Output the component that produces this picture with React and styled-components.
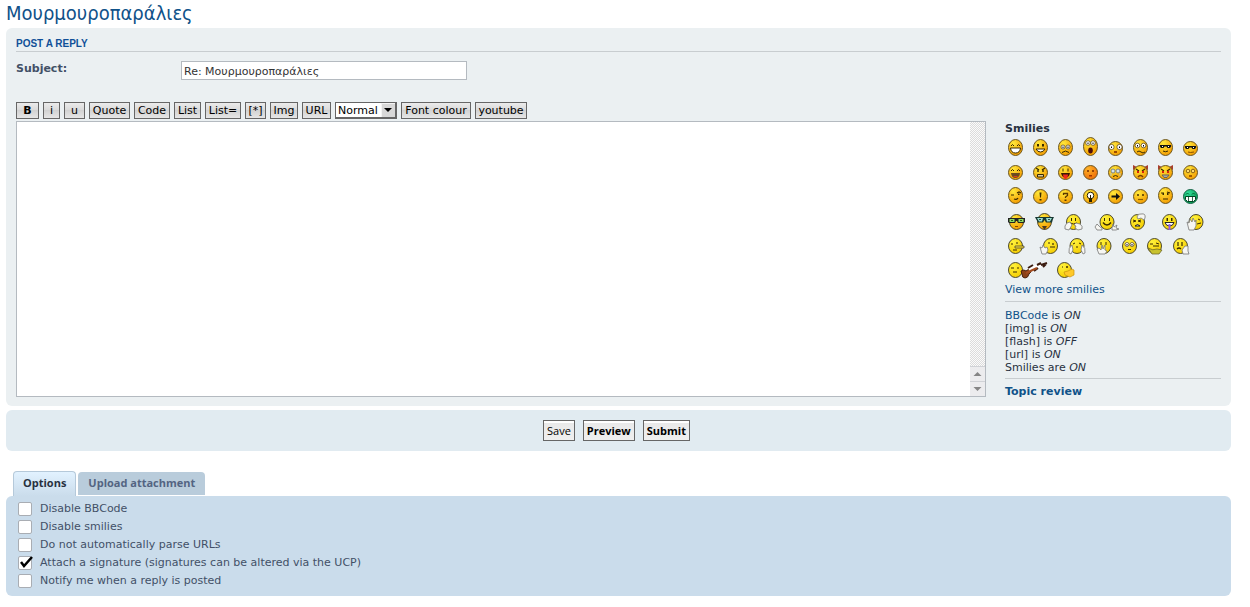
import React from "react";
import styled, { createGlobalStyle } from "styled-components";

const Global = createGlobalStyle`
  * { box-sizing: border-box; }
  body {
    margin: 0;
    background: #fff;
    color: #333a4a;
    font: 11px/13px "DejaVu Sans", Verdana, sans-serif;
  }
  a { color: #105289; text-decoration: none; }
`;

const Page = styled.main`
  padding: 0 19px 11px 6px;
`;
const Title = styled.h1`
  margin: 0;
  height: 28px;
  font: 400 20px/27px "DejaVu Sans Condensed", "Trebuchet MS", sans-serif;
  color: #105289;
`;
const Panel = styled.section`
  border-radius: 6px;
  background: ${(p) => p.$bg};
  padding: ${(p) => p.$pad};
  margin-bottom: ${(p) => p.$after || 0}px;
`;
const PanelTitle = styled.h2`
  margin: 0 0 9px;
  border-bottom: 1px solid #c8cdd0;
  font: bold 10px/15px "Liberation Sans", Arial, sans-serif;
  text-transform: uppercase;
  color: #115098;
`;
const SubjectRow = styled.div`
  display: flex;
  align-items: flex-start;
  margin-bottom: 22px;
`;
const SubjectLabel = styled.label`
  width: 165px;
  line-height: 15px;
  font-weight: bold;
  color: #425067;
`;
const SubjectInput = styled.input`
  width: 286px;
  height: 19px;
  padding: 1px 2px 0;
  border: 1px solid #b4bac0;
  background: #fff;
  color: #333;
  font: 11px "DejaVu Sans", Verdana, sans-serif;
`;
const Toolbar = styled.div`
  display: flex;
  gap: 4px;
  margin-bottom: 2px;
`;
const Button = styled.button`
  height: 17px;
  min-width: ${(p) => p.$w || 0}px;
  padding: 1px 2px 0;
  border: 1px solid #666;
  background: linear-gradient(#ebebeb 0, #d9d9d9 50%, #d2d2d2 50%, #e6e6e6 100%);
  color: #000;
  font: ${(p) => (p.$bold ? "bold" : "normal")} 11px/14px "DejaVu Sans", "Lucida Grande", sans-serif;
  white-space: nowrap;
`;
const ActionButton = styled(Button)`
  height: 21px;
  padding: 0 3px;
  background: linear-gradient(#fff 0, #fff 2px, #e9e9e9 2px, #efefef 100%);
  font-family: "Open Sans", "Lucida Grande", sans-serif;
`;
const SelectBox = styled.span`
  position: relative;
  display: flex;
  width: 62px;
  height: 17px;
`;
const SizeSelect = styled.select`
  appearance: none;
  width: 100%;
  padding: 1px 2px 0;
  border: 1px solid #666;
  border-radius: 0;
  border-right-width: 2px;
  border-bottom-width: 2px;
  background: #fff;
  color: #000;
  font: 11px/13px "DejaVu Sans", "Lucida Grande", sans-serif;
`;
const SelectArrow = styled.svg`
  position: absolute;
  right: 2px;
  top: 1px;
  pointer-events: none;
`;
const Editor = styled.div`
  display: flex;
  gap: 19px;
`;
const MessageBox = styled.div`
  flex: 1;
  display: flex;
  height: 276px;
  border: 1px solid #b4bac0;
  background: #fff;
`;
const Message = styled.textarea`
  flex: 1;
  border: 0;
  padding: 3px;
  resize: none;
  outline: 0;
  background: transparent;
  font: 11px/15px "DejaVu Sans", Verdana, sans-serif;
`;
const Rail = styled.div`
  width: 15px;
  display: flex;
  flex-direction: column;
  justify-content: flex-end;
  background: repeating-conic-gradient(#dcdcdc 0 25%, #fbfbfb 0 50%) 0 0 / 2px 2px;
`;
const RailButton = styled.svg`
  display: block;
  background: #ececee;
  border-top: 1px solid #d0d2d6;
`;
const Sidebar = styled.aside`
  width: 216px;
  color: #28313f;
`;
const SideTitle = styled.h3`
  margin: 0;
  font-size: 11px;
  line-height: 16px;
`;
const SmileyList = styled.div`
  padding-left: 3px;
  margin-bottom: 5px;
`;
const SmileyRow = styled.div`
  display: flex;
  align-items: flex-end;
  gap: 10px;
  height: 24px;
  margin-top: ${(p) => (p.$gap ? 2 : 0)}px;
  &:first-child { height: 19px; }
`;
const Smiley = styled.a`
  display: block;
  svg { display: block; }
`;
const Status = styled.div`
  margin: 5px 0;
  padding: 7px 0 4px;
  border: solid #c8cdd0;
  border-width: 1px 0;
`;
const Actions = styled.div`
  display: flex;
  justify-content: center;
  gap: 8px;
`;
const Tabs = styled.nav`
  display: flex;
  align-items: flex-end;
  gap: 2px;
  padding-left: 7px;
`;
const Tab = styled.a`
  padding: 0 10px;
  border-radius: 4px 4px 0 0;
  font-family: "Open Sans", "Lucida Grande", sans-serif;
  font-weight: bold;
  ${(p) =>
    p.$active
      ? "height: 25px; line-height: 22px; color: #28313f; background: linear-gradient(#e2f2ff, #cadceb); border: 1px solid #b5c9da; border-bottom: 0; padding: 0 9px;"
      : "height: 23px; margin-bottom: 1px; line-height: 22px; color: #536482; background: #b9ccdb;"}
`;
const Option = styled.label`
  position: relative;
  display: flex;
  align-items: flex-start;
  gap: 8px;
  height: 18px;
  line-height: 20px;
  color: #425067;
`;
const Check = styled.input`
  appearance: none;
  width: 14px;
  height: 14px;
  margin: 3px 0 0;
  border: 1px solid #a9adb3;
  border-radius: 2px;
  background: #fff;
`;
const Tick = styled.svg`
  position: absolute;
  left: 1px;
  top: 1px;
  pointer-events: none;
`;

const K = ({ d, c = "#3a2a00", w = 1 }) => <path d={d} fill="none" stroke={c} strokeWidth={w} />;
const F = ({ d, c = "#3a2a00" }) => <path d={d} fill={c} />;
const Shades = ({ y = 0 }) => (
  <g transform={`translate(0 ${y})`}>
    <F d="M2 6h11v1.500L12 9H9.500L8.500 7.500h-2L5.500 9H3L2 7.500z" c="#111" />
    <path d="M4 7.500h1M10 7.500h1" stroke="#fff" />
  </g>
);
const Eyes = ({ y = 5, r = 2.4, a = 4.5, b = 10.5 }) => (
  <g fill="#fff" stroke="#4a3a20" strokeWidth=".7">
    <circle cx={a} cy={y} r={r} />
    <circle cx={b} cy={y} r={r} />
    <path d={`M${a} ${y - 0.5}v1.500M${b} ${y - 0.5}v1.500`} stroke="#000" strokeWidth="1" />
  </g>
);
const Horns = () => <F d="M0 5V0l5 2.500zM15 5V0l-5 2.500z" c="#a8402c" />;

/* Forum faces: h is the height, tone the palette, art the features drawn on the head. */
const classic = [
  [
    { n: "Very Happy", h: 17, art: <><K d="M3 7l1.500-1.500L6 7M9 7l1.500-1.500L12 7" /><path d="M2.500 9h10q-.5 5-5 5t-5-5z" fill="#fff" stroke="#3a2a00" /></> },
    { n: "Smile", h: 17, art: <><F d="M4 5h2v2.500H4zM9 5h2v2.500H9z" /><path d="M3 10h9q-1.500 3-4.500 3T3 10z" fill="#fff" stroke="#3a2a00" /></> },
    { n: "Sad", h: 17, art: <><Eyes y={8} r={2} a={5} b={10} /><K d="M4 13.500q3.500-3 7 0" /></> },
    { n: "Surprised", h: 19, art: <><Eyes y={6} r={2.3} a={5} b={10} /><ellipse cx="7.500" cy="13.500" rx="2.300" ry="3" fill="#4a0d0d" /></> },
    { n: "Shocked", h: 15, art: <><Eyes y={6} r={2.6} a={3.5} b={11.5} /><F d="M6 10h3v2H6z" c="#9c4a00" /></> },
    { n: "Confused", h: 17, art: <><Eyes y={6.5} r={2.3} /><K d="M4 13l2-1 2 1 2 1 2-1" /></> },
    { n: "Cool", h: 17, art: <><Shades y={0} /><K d="M5 12q2.500 1.500 5 0" /></> },
    { n: "Laid back", h: 15, art: <><Shades y={-1} /><K d="M5 11q2 1 6 0" c="#8a5200" /></> },
  ],
  [
    { n: "Laughing", h: 15, art: <><K d="M3 6l1.500-1.500L6 6M9 6l1.500-1.500L12 6" /><F d="M3 8h9q-.5 5-4.500 5T3 8z" c="#6b4a20" /><F d="M5 11h5q-2.500 2.500-5 0z" c="#e23a20" /></> },
    { n: "Mad", h: 15, art: <><K d="M3 3l3 2M12 3L9 5M5 5v2M10 5v2" w={1.4} /><path d="M4.500 9.500h6v2.500h-6z" fill="#d9c9a0" stroke="#3a2a00" /></> },
    { n: "Razz", h: 15, art: <><K d="M5 3.500v3M10 3.500v3" /><F d="M3 8h9q-1 4.500-4.500 4.500T3 8z" c="#3a1a00" /><F d="M5 9.500h5q-.5 4.500-2.500 4.500T5 9.500z" c="#f0281e" /></> },
    { n: "Embarrassed", h: 15, tone: "hot", art: <><K d="M4 6h2M9 6h2" w={1.5} c="#7a2a00" /><F d="M6 10h3v1.500H6z" c="#a33200" /></> },
    { n: "Crying", h: 15, art: <><g fill="#d4e4ec" stroke="#687078" strokeWidth=".8"><circle cx="5" cy="6" r="2" /><circle cx="10" cy="6" r="2" /><path d="M3 8v3M12 8v3" stroke="#a8d0e8" /></g><K d="M5 11.500q2.500-2 5 0" /></> },
    { n: "Evil", h: 15, horns: true, art: <><K d="M3 4l3 2M12 4L9 6" w={1.3} /><F d="M4 6h2v2H4zM9 6h2v2H9z" c="#d8200c" /><K d="M5 12q2.500-3 5 0" w={1.5} c="#7a3a00" /></> },
    { n: "Twisted", h: 15, horns: true, art: <><K d="M3 4l3 2M12 4L9 6" w={1.3} /><F d="M4 6h2v2H4zM9 6h2v2H9z" c="#d8200c" /><path d="M4 10h7l-2 2.500H6z" fill="#aaa" stroke="#665" /></> },
    { n: "Rolling Eyes", h: 15, art: <><g fill="#ffdb70" stroke="#7a5510" strokeWidth=".9"><circle cx="5" cy="6" r="1.800" /><circle cx="10" cy="6" r="1.800" /></g><F d="M6 10h3v2H6z" c="#a35a00" /></> },
  ],
  [
    { n: "Wink", h: 17, art: <><K d="M3 8h3M9 6l2-1 2 1M6 12q3 1 4-1" w={1.2} /><F d="M10 6.500h1.500V8H10z" /></> },
    { n: "Exclamation", h: 15, art: <F d="M6.500 3.500h2L8 8.500H7zM6.500 10h2v1.500h-2z" /> },
    { n: "Question", h: 15, art: <><K d="M5.500 6V4.500h4v2l-2 1.500v1" w={1.3} c="#5a3800" /><F d="M6.500 10.500h2V12h-2z" c="#5a3800" /></> },
    { n: "Idea", h: 15, art: <><circle cx="7.500" cy="6.500" r="3.300" fill="#fff" stroke="#2a2000" /><F d="M6 9h3v4H6zM7 6h1v4H7z" c="#2a2000" /></> },
    { n: "Arrow", h: 15, art: <F d="M3.500 6.500H8V4l4 3.500L8 11V8.500H3.500z" c="#111" /> },
    { n: "Neutral", h: 15, art: <><K d="M4 6h2M9 6h2" w={1.6} c="#4a3000" /><K d="M5 10.500h5" w={1.2} c="#8a5a00" /></> },
    { n: "Uh-oh", h: 17, art: <><K d="M3 6h3M9 5l3 1M5 12h5" w={1.2} /><F d="M4.500 6H6v2H4.500zM9 6h1.500v2H9z" /></> },
    { n: "Mr. Green", h: 15, tone: "green", art: <><K d="M3 5.500L4.500 4 6 5.500M9 5.500L10.500 4 12 5.500" c="#063" /><path d="M2.500 7.500h10v3l-2 2h-6l-2-2z" fill="#fff" stroke="#042" /><K d="M5.500 7.500v5M9.500 7.500v5" c="#042" w={0.8} /></> },
  ],
];

/* Hand-and-prop smilies: w is the slot width, cx the centre of the head. */
const Hand = ({ d }) => <path d={d} fill="#f6f6f2" stroke="#777" strokeWidth=".8" />;
const extra = [
  [
    { n: "Geek", w: 17, cx: 8.5, geek: true, art: <><path d="M0 4h17v4l-1 1H10L9 7H8L7 9H1L0 8z" fill="#222" /><F d="M1.500 5h5v3h-5zM10.500 5h5v3h-5z" c="#8edc64" /><K d="M3 6.500h2M12 6.500h2" c="#2a5a1a" /><K d="M7 12.500h3" c="#8a4a00" /></> },
    { n: "Ubergeek", w: 19, cx: 9.5, h: 17, geek: true, art: <><path d="M0 4h19l-1 2-1 3.500h-6L9.500 7 8 9.500H3L1 6z" fill="#173832" /><F d="M2 5h6L7 8.500H4zM11 5h6l-2 3.500h-3z" c="#9cded0" /><K d="M4 6.500h2M13 6.500h2" c="#2a5048" /><F d="M7 13h5l-2.500 4z" c="#4c3a20" /></> },
    { n: "Giggle", w: 21, cx: 9.5, art: <><F d="M7 4h1v3H7zM11 4h1v3h-1z" /><K d="M6 9q3.500 2 7 0" /><Hand d="M1 15q-1-3 2-6l3-1 2 3-3 5zM18 15q1-3-2-5l-4-1-2 2 2 1-1 2 3 2z" /></> },
    { n: "Wave", w: 25, cx: 12, art: <><F d="M9 4h1v3H9zM14 4h1v3h-1z" /><K d="M8 8.500q4 5 8 0" w={1.5} /><Hand d="M0 13l2-3 3 3 2 1v2H2zM17 14l1-4 1 3 3-2-1 3 3 1-3 1h-4z" /></> },
    { n: "Headache", w: 22, cx: 7.5, art: <><K d="M3 6l3 1-3 1M11 6L8 7l3 1" /><path d="M5 12q2.500-3 5 0z" fill="#fff" stroke="#222" /><Hand d="M7 3q1-4 4-3 5-1 4 4l-1 2-3-2-3 1z" /></> },
    { n: "Drool", w: 15, cx: 7.5, art: <><F d="M4.500 4H6v3H4.500zM9 4h1.500v3H9z" /><path d="M3 8.500h9q-1 3.500-4.500 3.500T3 8.500z" fill="#fff" stroke="#222" /><K d="M7.500 10v6" c="#9a58e6" w={2} /></> },
    { n: "Facepalm", w: 17, cx: 9, art: <><K d="M11 5l2 1M10 10l4-1" /><Hand d="M0 8l2 1 1-4 2 3 1-4 2 4 1-2v6l-2 4H2z" /></> },
  ],
  [
    { n: "Liar", w: 22, cx: 7.5, art: <><K d="M3 6h2M8 5h2M5 12h4" w={1.2} /><path d="M7 8h9v2H7z" fill="#ffe23c" stroke="#333" strokeWidth=".7" /></> },
    { n: "Rofl", w: 18, cx: 10.5, art: <><K d="M8 5h2M13 5v2M10 9h5" w={1.2} /><Hand d="M0 9l2 1 1-3 2 3 2-1 1 3-2 4H2z" /></> },
    { n: "Shrug", w: 18, cx: 9, art: <><K d="M5 6l2-1M11 5l2 1M8 9h2" /><Hand d="M1 15q-1-5 3-8l1 5-2 4zM17 15q1-5-3-8l-1 5 2 4z" /></> },
    { n: "Peace", w: 16, cx: 8, art: <><K d="M5 4v3M10 4v3" /><Hand d="M3 16l-2-5 2-1 2 2 1-5 1 4 2-4v5l2 1-2 3z" /></> },
    { n: "Blank", w: 15, cx: 7.5, art: <><Eyes y={6.5} r={2} a={5} b={10} /><K d="M6 11.500h3" /></> },
    { n: "Think", w: 16, cx: 7.5, art: <><K d="M3 6h3M9 5l3 1M6 8h6" /><path d="M1 10q5 3 9 1l5 1-3 4H5z" fill="#c8c22e" stroke="#6e6a28" strokeWidth=".8" /></> },
    { n: "Weep", w: 17, cx: 7.5, art: <><K d="M5 4v4M9 4v4M4 11q2-2 4 0" w={1.2} /><Hand d="M9 12l3-4h3v5l1 3h-6z" /></> },
  ],
  [
    { n: "Violin", w: 39, cx: 7.5, art: <><K d="M3 6h3M9 6h2M5 10h4" /><path d="M13 9q3-2 5 0l3-2 3 2-3 3q-1 4-4 4t-3-4z" fill="#8c4218" stroke="#4a2410" /><path d="M21 8l12-5" stroke="#fff" strokeWidth="5" /><path d="M20 6l5-3M26 9l4-3M29 3l4-2M33 3l6-2M35 5l3-3" stroke="#3a1c10" strokeWidth="2" /><path d="M18 11l11-5" stroke="#a34c20" strokeWidth="2" /></> },
    { n: "Whistle", w: 17, cx: 7.5, art: <><K d="M5 5h1M9 5h2M10 4v2" /><path d="M7 10l4-1 4-2 2 1v5l-4 2-5-2z" fill="#ffc929" stroke="#c99310" strokeWidth=".7" /></> },
  ],
];

const TONES = {
  sun: ["#ffe83a", "#f39a00"],
  hot: ["#ffb428", "#ee6c08"],
  green: ["#30dc98", "#069850"],
  plain: ["#fff23c", "#f5cc00"],
};

function Face({ n, w = 15, h, cx = 7.5, tone, geek, horns, art, plain }) {
  const t = tone || (plain && !geek ? "plain" : "sun");
  const height = h || (plain ? 16 : 15);
  const id = n.replace(/\W/g, "");
  return (
    <Smiley href="#" title={n} aria-label={n}>
      <svg width={w} height={height} overflow="visible">
        <defs>
          <radialGradient id={id} cx=".35" cy=".25" r=".8">
            <stop offset="0" stopColor={TONES[t][0]} />
            <stop offset="1" stopColor={TONES[t][1]} />
          </radialGradient>
        </defs>
        {horns && <Horns />}
        <ellipse cx={cx} cy={height / 2} rx="7" ry={height / 2 - 0.5} fill={`url(#${id})`} stroke={t === "green" ? "#176447" : plain ? "#4d4a30" : "#6b5722"} />
        {art}
      </svg>
    </Smiley>
  );
}

const tools = [["B", 23, true], ["i", 17], ["u", 21], ["Quote", 41], ["Code", 36], ["List", 27], ["List=", 36], ["[*]", 21], ["Img", 28], ["URL", 29]];
const options = ["Disable BBCode", "Disable smilies", "Do not automatically parse URLs", "Attach a signature (signatures can be altered via the UCP)", "Notify me when a reply is posted"];

export default function App() {
  return (
    <Page>
      <Global />
      <Title>Μουρμουροπαράλιες</Title>
      <Panel $bg="#ebf0f2" $pad="8px 10px 6px" $after={4}>
        <PanelTitle>Post a reply</PanelTitle>
        <SubjectRow>
          <SubjectLabel htmlFor="subject">Subject:</SubjectLabel>
          <SubjectInput id="subject" defaultValue="Re: Μουρμουροπαράλιες" />
        </SubjectRow>
        <Toolbar>
          {tools.map(([t, w, b]) => <Button key={t} type="button" $w={w} $bold={b}>{t}</Button>)}
          <SelectBox>
            <SizeSelect aria-label="Font size" defaultValue="Normal">
              <option>Normal</option>
            </SizeSelect>
            <SelectArrow width="14" height="14">
              <path d="M0 0h14v14H0z" fill="#d8d8d8" />
              <path d="M0 .5h14M.5 0v14" stroke="#f4f4f4" />
              <path d="M3 5h8L7 9z" fill="#000" />
            </SelectArrow>
          </SelectBox>
          <Button type="button" $w={70}>Font colour</Button>
          <Button type="button" $w={52}>youtube</Button>
        </Toolbar>
        <Editor>
          <MessageBox>
            <Message aria-label="Message" />
            <Rail>
              <RailButton width="15" height="15"><path d="M3.500 9L7.500 5l4 4z" fill="#858585" /></RailButton>
              <RailButton width="15" height="15"><path d="M3.500 5h8l-4 4z" fill="#858585" /></RailButton>
            </Rail>
          </MessageBox>
          <Sidebar>
            <SideTitle>Smilies</SideTitle>
            <SmileyList>
              {classic.map((row, i) => <SmileyRow key={i}>{row.map((s) => <Face key={s.n} {...s} />)}</SmileyRow>)}
              {extra.map((row, i) => <SmileyRow key={i} $gap={i === 0}>{row.map((s) => <Face key={s.n} plain {...s} />)}</SmileyRow>)}
            </SmileyList>
            <a href="#">View more smilies</a>
            <Status>
              <div><a href="#">BBCode</a> is <em>ON</em></div>
              <div>[img] is <em>ON</em></div>
              <div>[flash] is <em>OFF</em></div>
              <div>[url] is <em>ON</em></div>
              <div>Smilies are <em>ON</em></div>
            </Status>
            <SideTitle as="h4"><a href="#">Topic review</a></SideTitle>
          </Sidebar>
        </Editor>
      </Panel>
      <Panel $bg="#e1ebf1" $pad="10px 14px 10px 10px" $after={20}>
        <Actions>
          <ActionButton type="button">Save</ActionButton>
          <ActionButton type="button" $bold>Preview</ActionButton>
          <ActionButton type="button" $bold>Submit</ActionButton>
        </Actions>
      </Panel>
      <Tabs>
        <Tab href="#" $active>Options</Tab>
        <Tab href="#">Upload attachment</Tab>
      </Tabs>
      <Panel $bg="#cadceb" $pad="3px 12px 7px">
        {options.map((o, i) => (
          <Option key={o}>
            <Check type="checkbox" defaultChecked={i === 3} />
            {i === 3 && (
              <Tick width="15" height="15"><path d="M2 8l3 4 8-9" fill="none" stroke="#000" strokeWidth="2.500" /></Tick>
            )}
            {o}
          </Option>
        ))}
      </Panel>
    </Page>
  );
}
